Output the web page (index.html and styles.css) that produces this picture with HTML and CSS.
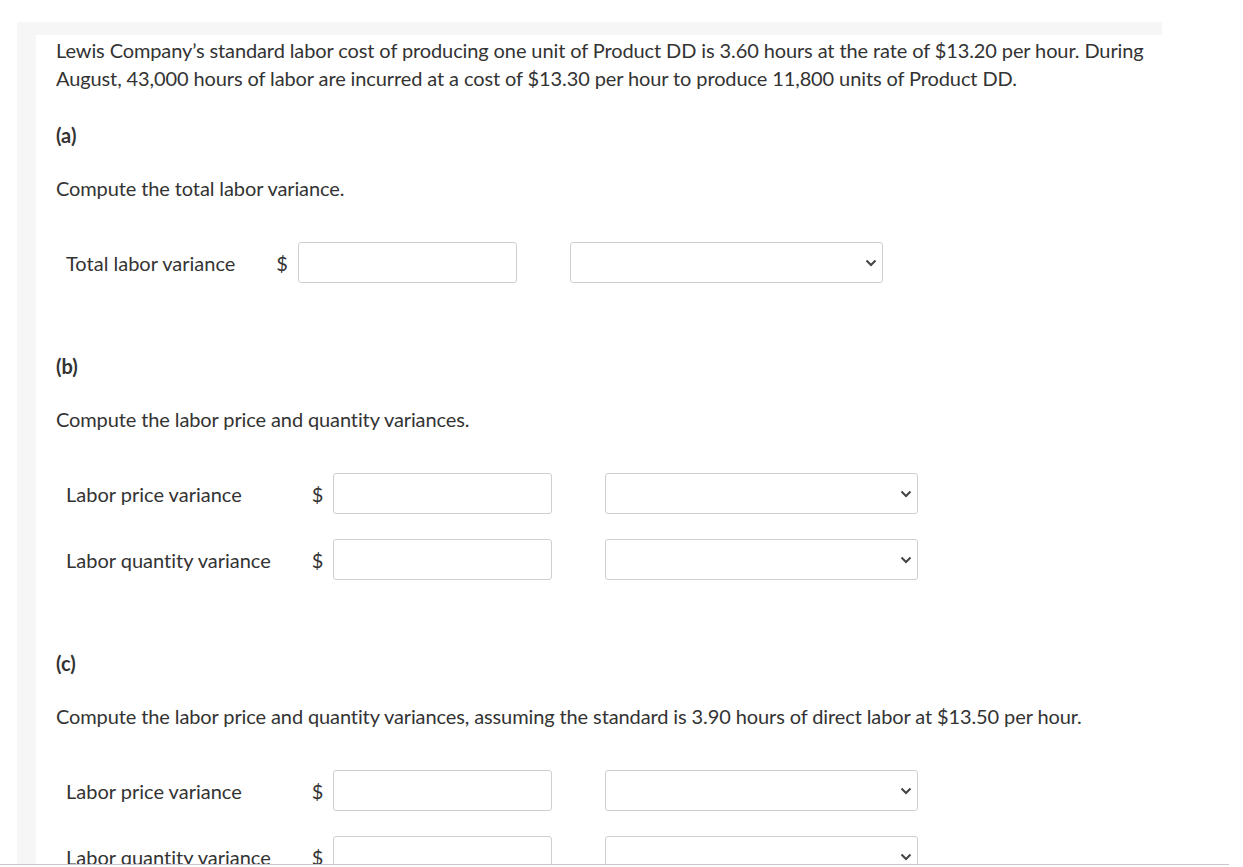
FILE: index.html
```html
<!DOCTYPE html>
<html lang="en">
<head>
<meta charset="utf-8">
<title>Labor variances</title>
<link rel="stylesheet" href="styles.css">
</head>
<body>
<div class="frame">
  <div class="sheet">
    <div class="content">
      <p class="intro">Lewis Company’s standard labor cost of producing one unit of Product DD is 3.60 hours at the rate of $13.20 per hour. During August, 43,000 hours of labor are incurred at a cost of $13.30 per hour to produce 11,800 units of Product DD.</p>

      <h3 class="part">(a)</h3>
      <p class="prompt">Compute the total labor variance.</p>
      <div class="answers">
        <span class="label">Total labor variance</span>
        <span class="cur">$</span>
        <input class="num" type="text">
        <select class="pick"><option></option></select>
      </div>

      <h3 class="part">(b)</h3>
      <p class="prompt">Compute the labor price and quantity variances.</p>
      <div class="answers">
        <span class="label">Labor price variance</span>
        <span class="cur">$</span>
        <input class="num" type="text">
        <select class="pick"><option></option></select>
        <span class="label">Labor quantity variance</span>
        <span class="cur">$</span>
        <input class="num" type="text">
        <select class="pick"><option></option></select>
      </div>

      <h3 class="part">(c)</h3>
      <p class="prompt">Compute the labor price and quantity variances, assuming the standard is 3.90 hours of direct labor at $13.50 per hour.</p>
      <div class="answers">
        <span class="label">Labor price variance</span>
        <span class="cur">$</span>
        <input class="num" type="text">
        <select class="pick"><option></option></select>
        <span class="label">Labor quantity variance</span>
        <span class="cur">$</span>
        <input class="num" type="text">
        <select class="pick"><option></option></select>
      </div>
    </div>
  </div>
</div>
<div class="cutline"></div>
</body>
</html>
```

FILE: styles.css
```css
html, body {
  margin: 0;
  padding: 0;
  background: #ffffff;
}

body {
  font-family: Lato, "Open Sans", Arial, sans-serif;
  color: #333333;
  font-size: 20px;
  line-height: 28px;
  font-variant-ligatures: none;
}

.frame {
  padding-top: 22px;
  padding-left: 17px;
}

.sheet {
  box-sizing: border-box;
  width: 1145px;
  background: #f6f6f6;
  padding-top: 13px;
  padding-left: 19px;
}

.content {
  background: #ffffff;
  padding: 1px 0 60px 20px;
}

.intro {
  margin: 0;
  max-width: 1100px;
  letter-spacing: -0.11px;
}

.part {
  margin: 29px 0 0 0;
  font-size: 20px;
  font-weight: 700;
  line-height: 28px;
}

.prompt {
  margin: 25px 0 0 0;
  letter-spacing: -0.11px;
}

.answers {
  display: grid;
  grid-template-columns: auto auto 219px 313px;
  justify-content: start;
  column-gap: 10px;
  row-gap: 25px;
  align-items: center;
  margin: 40px 0 69px 0;
}

.label {
  padding-left: 10px;
  padding-right: 31px;
}

.num,
.pick {
  box-sizing: border-box;
  height: 41px;
  border: 1px solid #cfcfcf;
  border-radius: 3px;
  background-color: #ffffff;
  font: inherit;
  margin: 0;
}

.num {
  width: 219px;
}

.pick {
  width: 313px;
  margin-left: 43px;
  appearance: none;
  -webkit-appearance: none;
  background-image: url("data:image/svg+xml,%3Csvg xmlns='http://www.w3.org/2000/svg' width='12' height='8' viewBox='0 0 12 8'%3E%3Cpath d='M1.5 1.5 L6 6 L10.5 1.5' fill='none' stroke='%23444' stroke-width='2'/%3E%3C/svg%3E");
  background-repeat: no-repeat;
  background-position: right 5px center;
}

.cutline {
  position: fixed;
  left: 0;
  right: 14px;
  bottom: 0;
  height: 2px;
  background: #ffffff;
  border-top: 1px solid #c8c8c8;
}
```
